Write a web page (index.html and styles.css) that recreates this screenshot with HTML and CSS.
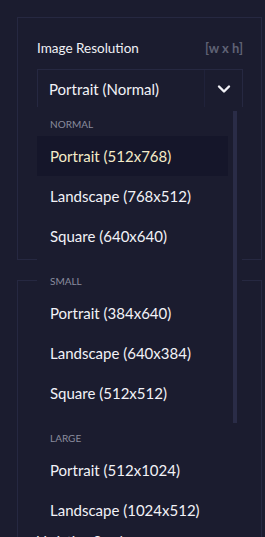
FILE: index.html
```html
<!DOCTYPE html>
<html>
<head>
    <title>Image Settings</title>
    <link rel="stylesheet" href="styles.css">
</head>
<body>
    <div class="panel">
        <div class="card">
            <div class="field-head">
                <span class="field-label">Image Resolution</span>
                <span class="field-hint">[w x h]</span>
            </div>
            <div class="select-wrap">
                <div class="select">
                    <span class="select-value">Portrait (Normal)</span>
                    <span class="select-arrow">
                        <svg width="14" height="10" viewBox="0 0 14 10">
                            <path d="M2 2.5 L7 7.5 L12 2.5" fill="none" stroke="#f2f2f7" stroke-width="2.4" stroke-linecap="round" stroke-linejoin="round"/>
                        </svg>
                    </span>
                </div>

                <!-- open dropdown menu -->
                <div class="menu">
                    <ul class="menu-list">
                        <li class="group first">Normal</li>
                        <li class="option selected">Portrait (512x768)</li>
                        <li class="option">Landscape (768x512)</li>
                        <li class="option">Square (640x640)</li>
                        <li class="group">Small</li>
                        <li class="option">Portrait (384x640)</li>
                        <li class="option">Landscape (640x384)</li>
                        <li class="option">Square (512x512)</li>
                        <li class="group">Large</li>
                        <li class="option">Portrait (512x1024)</li>
                        <li class="option">Landscape (1024x512)</li>
                    </ul>
                    <div class="scrollbar">
                        <div class="thumb"></div>
                    </div>
                </div>
            </div>
            <!-- preview frame, covered by the open menu -->
            <div class="preview"></div>
        </div>

        <div class="card">
            <div class="prompt-box"></div>
            <div class="field-head">
                <span class="field-label">Variation Seed</span>
            </div>
        </div>
    </div>
</body>
</html>
```

FILE: styles.css
```css
html, body {
    margin: 0;
    padding: 0;
    background-color: #1b1c2f;
    font-family: Lato, 'Noto Sans', sans-serif;
    color: #f2f2f7;
    overflow: hidden;
}

.panel {
    padding: 17px 3px 0 17px;
    display: flex;
    flex-direction: column;
    gap: 20px;
}

.card {
    border: 1px solid #262841;
    padding: 19px 18px 19px 19px;
}

.field-head {
    display: flex;
    justify-content: space-between;
    align-items: center;
    height: 22px;
    margin-bottom: 10px;
}

.field-label {
    font-size: 13.5px;
    color: #f0f0f5;
}

.field-hint {
    font-size: 13px;
    font-weight: bold;
    color: #5f6275;
}

.select-wrap {
    position: relative;
}

.select {
    display: flex;
    align-items: center;
    height: 37px;
    border: 1px solid #262841;
    border-bottom: none;
}

.select-value {
    flex: 1;
    padding-left: 11px;
    font-size: 15px;
}

.select-arrow {
    width: 37px;
    height: 100%;
    border-left: 1px solid #20223a;
    display: flex;
    align-items: center;
    justify-content: center;
}

.menu {
    position: absolute;
    top: 38px;
    left: 0;
    width: 205px;
    height: 422px;
    background-color: #1b1c2f;
    display: flex;
    z-index: 5;
}

.menu-list {
    list-style: none;
    margin: 0;
    padding: 0;
    width: 191px;
}

.group {
    padding: 19px 13px 6px;
    line-height: 12px;
    font-size: 10px;
    text-transform: uppercase;
    color: #8a8c9e;
}

.group.first {
    padding-top: 11px;
}

.option {
    height: 40px;
    line-height: 40px;
    padding-left: 13px;
    font-size: 15px;
    color: #f2f2f7;
}

.option.selected {
    background-color: #15162a;
    color: #f4ebc8;
}

.scrollbar {
    width: 14px;
    padding-top: 4px;
    display: flex;
    justify-content: center;
}

.thumb {
    width: 4px;
    height: 312px;
    background-color: #2a2c47;
}

.preview {
    height: 113px;
    margin: 20px 2px 0 0;
}

.prompt-box {
    height: 214px;
    margin-bottom: 16px;
}
```
